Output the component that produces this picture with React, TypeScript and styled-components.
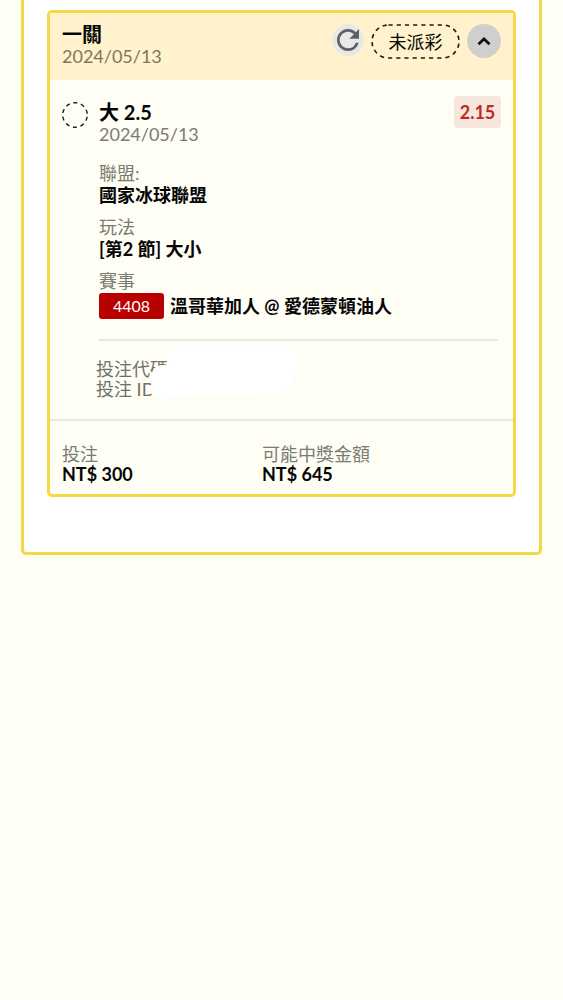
import React from "react";
import styled, { createGlobalStyle } from "styled-components";

const GlobalStyle = createGlobalStyle`
  *, *::before, *::after { box-sizing: border-box; }
  body {
    margin: 0;
    background: #fefef4;
    color: #050505;
    font-family: Lato, "Noto Sans CJK TC", sans-serif;
    font-size: 18px;
    line-height: 22px;
  }
  h2, h3, p, dl, dd { margin: 0; font: inherit; }
`;

const Panel = styled.main`
  margin: 0 21px;
  padding: 10px 23px 55px;
  background: #ffffff;
  border: 3px solid #f5d848;
  border-top: 0;
  border-radius: 0 0 5px 5px;
`;

const Ticket = styled.article`
  background: #fefef4;
  border: 3px solid #f5d848;
  border-radius: 5px;
`;

const TicketHeader = styled.header`
  display: flex;
  justify-content: space-between;
  align-items: flex-start;
  padding: 10px 12px 13px;
  background: #fff2cc;
`;

const Title = styled.h2`
  font-size: 20px;
  font-weight: 700;
`;

const DateText = styled.p<{ $warm?: boolean }>`
  color: ${(p) => (p.$warm ? "#7f7660" : "#7b7b76")};
`;

const Actions = styled.div`
  display: flex;
  align-items: flex-start;
  gap: 7px;
  padding-top: 1px;
`;

const RoundButton = styled.button<{ $size: number; $tone: string }>`
  display: flex;
  align-items: center;
  justify-content: center;
  width: ${(p) => p.$size}px;
  height: ${(p) => p.$size}px;
  padding: 0;
  border: 0;
  border-radius: 50%;
  background: ${(p) => p.$tone};
  cursor: pointer;
`;

const StatusPill = styled.span`
  position: relative;
  display: flex;
  align-items: center;
  justify-content: center;
  width: 89px;
  height: 35px;
`;

const PillOutline = styled.svg`
  position: absolute;
  inset: 0;
`;

const Selection = styled.section`
  display: flex;
  align-items: flex-start;
  padding: 16px 12px 20px;
`;

const PendingMark = styled.svg`
  flex: none;
  margin: 6px 11px 0 0;
`;

const SelectionBody = styled.div`
  flex: 1;
  min-width: 0;
`;

const SelectionTop = styled.div`
  display: flex;
  justify-content: space-between;
  align-items: flex-start;
`;

const Pick = styled.div`
  padding-top: 5px;
`;

const Odds = styled.span`
  width: 47px;
  padding: 5px 0;
  border-radius: 4px;
  background: #f7e6dd;
  color: #bd2a22;
  font-weight: 700;
  text-align: center;
`;

const Details = styled.dl`
  display: flex;
  flex-direction: column;
  gap: 10px;
  margin-top: 17px;
  padding-bottom: 20px;
  margin-right: 3px;
  border-bottom: 2px solid #e8e8de;
`;

const Label = styled.dt`
  color: #7b7b76;
`;

const Value = styled.dd`
  display: flex;
  align-items: center;
  gap: 6px;
  font-weight: 700;
`;

const MatchValue = styled(Value)`
  padding-top: 1px;
`;

const MatchCode = styled.span`
  width: 65px;
  padding: 2px 0;
  border-radius: 3px;
  background: #b80000;
  color: #ffffff;
  font-size: 16px;
  font-weight: 400;
  text-align: center;
`;

const References = styled.div`
  position: relative;
  margin: 18px 0 0 -3px;
  color: #70706b;
  line-height: 20px;
`;

const Mask = styled.svg`
  position: absolute;
  left: 52px;
  top: -16px;
`;

const Totals = styled.dl`
  display: grid;
  grid-template-columns: 200px 1fr;
  padding: 23px 12px 10px;
  border-top: 2px solid #e8e8de;
  line-height: 20px;
`;

export default function App() {
  return (
    <>
      <GlobalStyle />
      <Panel>
        <Ticket>
          <TicketHeader>
            <div>
              <Title>一關</Title>
              <DateText $warm>2024/05/13</DateText>
            </div>
            <Actions>
              <RoundButton type="button" aria-label="重新整理" $size={32} $tone="#e9e8e6">
                <svg width="22" height="22" viewBox="4 4 16 16">
                  <path
                    d="M17.65 6.35A7.958 7.958 0 0 0 12 4c-4.42 0-7.99 3.58-7.99 8s3.57 8 7.99 8c3.73 0 6.84-2.55 7.73-6h-2.08A5.99 5.99 0 0 1 12 18c-3.31 0-6-2.69-6-6s2.69-6 6-6c1.66 0 3.14.69 4.22 1.78L13 11h7V4z"
                    fill="#5b6267"
                  />
                </svg>
              </RoundButton>
              <StatusPill>
                <PillOutline width="89" height="35" aria-hidden="true">
                  <rect x="1" y="1" width="87" height="33" rx="16.5" fill="none" stroke="#1c1a14" strokeWidth="1.6" strokeDasharray="4.2 4" />
                </PillOutline>
                未派彩
              </StatusPill>
              <RoundButton type="button" aria-label="收合" $size={34} $tone="#d0cfcd">
                <svg width="14" height="10" viewBox="0 0 14 10">
                  <path d="M1.5 8.2 7 3 12.5 8.2" fill="none" stroke="#111111" strokeWidth="2.8" />
                </svg>
              </RoundButton>
            </Actions>
          </TicketHeader>

          <Selection>
            <PendingMark width="26" height="26" viewBox="0 0 26 26" aria-hidden="true">
              <circle cx="13" cy="13" r="12.3" fill="none" stroke="#1c1c1c" strokeWidth="1.4" strokeDasharray="4.1 3.63" strokeDashoffset="-1.8" />
            </PendingMark>
            <SelectionBody>
              <SelectionTop>
                <Pick>
                  <Title as="h3">大 2.5</Title>
                  <DateText>2024/05/13</DateText>
                </Pick>
                <Odds>2.15</Odds>
              </SelectionTop>
              <Details>
                <div>
                  <Label>聯盟:</Label>
                  <Value>國家冰球聯盟</Value>
                </div>
                <div>
                  <Label>玩法</Label>
                  <Value>[第2 節] 大小</Value>
                </div>
                <div>
                  <Label>賽事</Label>
                  <MatchValue>
                    <MatchCode>4408</MatchCode>
                    溫哥華加人 @ 愛德蒙頓油人
                  </MatchValue>
                </div>
              </Details>
              <References>
                <p>投注代碼</p>
                <p>投注 ID</p>
                <Mask width="152" height="56" viewBox="0 0 152 56" aria-hidden="true">
                  <path d="M24 4C50 2 90 1 132 2C145 2 150 8 149 18C149 30 145 45 132 49C115 53 60 52 14 55C4 55 3 52 3 48V37C3 32 4 26 9 23L21 21C20 16 18 8 24 4Z" fill="#ffffff" />
                </Mask>
              </References>
            </SelectionBody>
          </Selection>

          <Totals>
            <div>
              <Label>投注</Label>
              <Value>NT$ 300</Value>
            </div>
            <div>
              <Label>可能中獎金額</Label>
              <Value>NT$ 645</Value>
            </div>
          </Totals>
        </Ticket>
      </Panel>
    </>
  );
}
